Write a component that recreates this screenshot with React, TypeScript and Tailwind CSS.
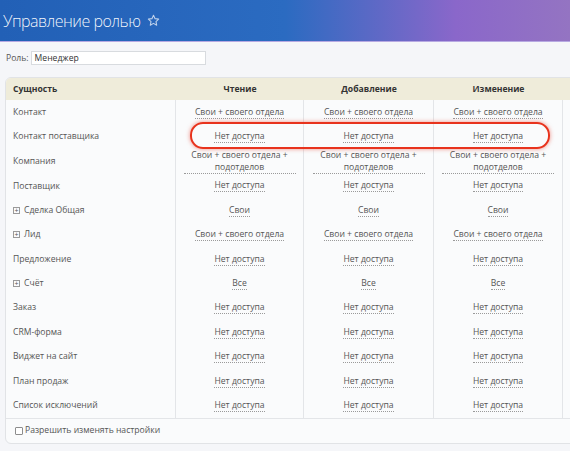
import React from "react";

type Row = {
  name: string;
  expand?: boolean;
  tall?: boolean;
  read: string;
  add: string;
  edit: string;
};

const ROWS: Row[] = [
  { name: "Контакт", read: "Свои + своего отдела", add: "Свои + своего отдела", edit: "Свои + своего отдела" },
  { name: "Контакт поставщика", read: "Нет доступа", add: "Нет доступа", edit: "Нет доступа" },
  {
    name: "Компания",
    tall: true,
    read: "Свои + своего отдела + подотделов",
    add: "Свои + своего отдела + подотделов",
    edit: "Свои + своего отдела + подотделов",
  },
  { name: "Поставщик", read: "Нет доступа", add: "Нет доступа", edit: "Нет доступа" },
  { name: "Сделка Общая", expand: true, read: "Свои", add: "Свои", edit: "Свои" },
  { name: "Лид", expand: true, read: "Свои + своего отдела", add: "Свои + своего отдела", edit: "Свои + своего отдела" },
  { name: "Предложение", read: "Нет доступа", add: "Нет доступа", edit: "Нет доступа" },
  { name: "Счёт", expand: true, read: "Все", add: "Все", edit: "Все" },
  { name: "Заказ", read: "Нет доступа", add: "Нет доступа", edit: "Нет доступа" },
  { name: "CRM-форма", read: "Нет доступа", add: "Нет доступа", edit: "Нет доступа" },
  { name: "Виджет на сайт", read: "Нет доступа", add: "Нет доступа", edit: "Нет доступа" },
  { name: "План продаж", read: "Нет доступа", add: "Нет доступа", edit: "Нет доступа" },
  { name: "Список исключений", read: "Нет доступа", add: "Нет доступа", edit: "Нет доступа" },
];

function Access({ value }: { value: string }) {
  return (
    <span className="inline-block max-w-[112px] border-b border-dotted border-[#9a9a9a] text-center leading-[12px] text-[#555]">
      {value}
    </span>
  );
}

function Cell({ value, w }: { value: string; w: string }) {
  return (
    <div className={`${w} flex h-full shrink-0 items-center justify-center border-r border-[#e3e5e8]`}>
      <Access value={value} />
    </div>
  );
}

export default function App() {
  return (
    <div
      className="relative h-[451px] w-[570px] overflow-hidden bg-[#f5f6f9] text-[8.6px] text-[#555]"
      style={{ fontFamily: '"Open Sans", "Noto Sans", sans-serif' }}
    >
      <div className="flex h-[42px] items-center gap-[7px] border-b border-[#b7a9e2] bg-[linear-gradient(90deg,#2260b6_0%,#2b6bc1_50%,#8a67ca_80%,#9474c2_100%)] pl-[3px]">
        <span className="text-[16px] font-light tracking-[-0.5px] text-white/95">Управление ролью</span>
        <svg width="13" height="13" viewBox="0 0 24 24" fill="none" stroke="rgba(255,255,255,0.7)" strokeWidth="2" strokeLinejoin="round">
          <path d="M12 2.5l2.9 6.1 6.6.8-4.9 4.6 1.3 6.6L12 17.3l-5.9 3.3 1.3-6.6-4.9-4.6 6.6-.8z" />
        </svg>
      </div>

      <div className="flex items-center gap-[2px] px-[6px] pt-[9px]">
        <span>Роль:</span>
        <div className="flex h-[14px] w-[175px] items-center border border-[#d8dbdf] bg-white px-[3px] text-[#333]">
          Менеджер
        </div>
      </div>

      <div className="mt-[12px] ml-[5px] w-[600px] overflow-hidden rounded-[6px] border border-[#e1e3e6] bg-[#fafbfc]">
        <div className="flex h-[22px] items-center bg-[#efecda] font-bold text-[#333]">
          <div className="w-[170px] shrink-0 pl-[7px]">Сущность</div>
          <div className="w-[128px] shrink-0 text-center">Чтение</div>
          <div className="w-[130px] shrink-0 text-center">Добавление</div>
          <div className="w-[129px] shrink-0 text-center">Изменение</div>
          <div className="flex-1" />
        </div>
        {ROWS.map((r) => (
          <div key={r.name} className={`flex ${r.tall ? "h-[25px]" : "h-[24.4px]"} items-center`}>
            <div className="flex h-full w-[170px] shrink-0 items-center gap-[4px] border-r border-[#e3e5e8] pl-[7px]">
              {r.expand && (
                <span className="flex h-[7px] w-[7px] items-center justify-center border border-[#9a9a9a] text-[7px] leading-none text-[#555]">
                  +
                </span>
              )}
              {r.name}
            </div>
            <Cell value={r.read} w="w-[128px]" />
            <Cell value={r.add} w="w-[130px]" />
            <Cell value={r.edit} w="w-[129px]" />
            <div className="flex-1" />
          </div>
        ))}
        <div className="flex h-[25px] items-center gap-[2px] border-t border-[#e3e5e8] pl-[9px]">
          <span className="h-[8px] w-[8px] rounded-[1px] border border-[#8d8d8d] bg-white" />
          <span>Разрешить изменять настройки</span>
        </div>
      </div>

      <div className="absolute top-[122px] left-[190px] h-[27px] w-[360px] rounded-[13px] border-[2.5px] border-[#e8331d] shadow-[0_0_4px_rgba(230,40,20,0.5)]" />
    </div>
  );
}
